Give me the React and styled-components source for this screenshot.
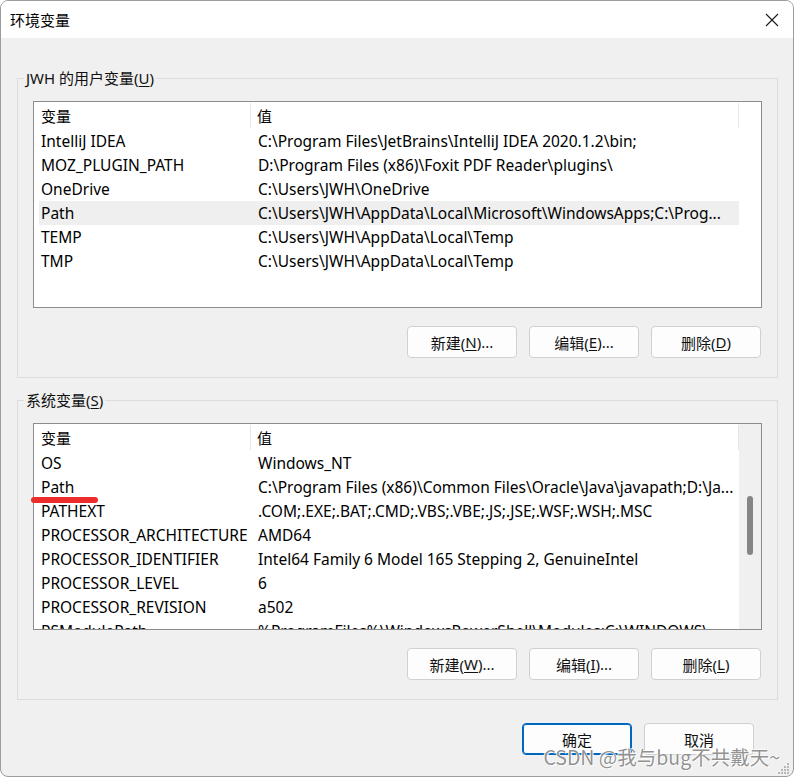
import React from 'react';
import styled, { createGlobalStyle } from 'styled-components';

const Global = createGlobalStyle`
  html, body { margin: 0; padding: 0; background: #ffffff; }
  body { font-family: "Noto Sans", "Noto Sans CJK SC", sans-serif; }
  * { box-sizing: border-box; }
`;

const Window = styled.div`
  position: relative;
  width: 794px;
  height: 777px;
  border: 1px solid #9c9c9c;
  border-radius: 8px;
  overflow: hidden;
  background: #f0f0f0;
  display: flex;
  flex-direction: column;
  font-family: "Noto Sans", "Noto Sans CJK SC", sans-serif;
  font-size: 15px;
  color: #000;
`;

const TitleBar = styled.div`
  height: 37px;
  flex: none;
  background: #ffffff;
  display: flex;
  align-items: center;
  justify-content: space-between;
  padding: 0 14px 0 9px;
  font-size: 15px;
`;

const CloseBtn = styled.div`
  width: 14px;
  height: 14px;
  display: flex;
  align-items: center;
  justify-content: center;
`;

const Body = styled.div`
  flex: 1;
  display: flex;
  flex-direction: column;
  padding: 30px 15px 0 16px;
`;

const Group = styled.fieldset`
  margin: ${p => (p.$first ? '0' : '12px 0 0 0')};
  padding: 13px 15px 19px 15px;
  border: 1px solid #dcdcdc;
  min-width: 0;
`;

const Legend = styled.legend`
  padding: 0 2px;
  margin-left: -9px;
  line-height: 20px;
  font-size: 15px;
  color: #111;
`;

const Key = styled.span`
  text-decoration: underline;
  text-underline-offset: 2px;
  text-decoration-thickness: 1px;
`;

const ListBox = styled.div`
  height: 207px;
  border: 1px solid #8c8c8c;
  background: #ffffff;
  display: flex;
  overflow: hidden;
  font-size: 15.5px;
`;

const Table = styled.div`
  width: 705px;
  flex: none;
  padding-left: 5px;
  display: flex;
  flex-direction: column;
  overflow: hidden;
`;

const Header = styled.div`
  height: 27px;
  flex: none;
  display: flex;
  align-items: stretch;
  font-size: 15px;
`;

const HeadCell = styled.div`
  width: ${p => p.$w}px;
  flex: ${p => (p.$w ? 'none' : '1')};
  padding-left: ${p => p.$pad}px;
  display: flex;
  align-items: center;
  border-right: 1px solid #e6e6e6;
  margin: 1px 0;
`;

const Row = styled.div`
  height: 24px;
  flex: none;
  display: flex;
  align-items: center;
  background: ${p => (p.$sel ? '#efefef' : 'transparent')};
  white-space: nowrap;
`;

const NameCell = styled.div`
  width: 213px;
  flex: none;
  padding-left: 2px;
  overflow: hidden;
`;

const ValueCell = styled.div`
  flex: 1;
  min-width: 0;
  padding-left: 6px;
  overflow: hidden;
`;

const Track = styled.div`
  flex: 1;
  background: ${p => (p.$show ? '#f0f0f0' : '#ffffff')};
  display: flex;
  justify-content: center;
  padding-top: 72px;
`;

const Thumb = styled.div`
  width: 6px;
  height: 59px;
  border-radius: 3px;
  background: #858585;
`;

const ButtonRow = styled.div`
  display: flex;
  justify-content: flex-end;
  gap: 12px;
  margin-top: ${p => p.$mt || 18}px;
  padding-right: ${p => p.$pr || 1}px;
`;

const Button = styled.button`
  width: 110px;
  height: 32px;
  border: 1px solid ${p => (p.$primary ? '#0067c0' : '#d0d0d0')};
  box-shadow: ${p => (p.$primary ? 'inset 0 0 0 1px #0067c0' : 'none')};
  border-radius: 4px;
  background: #fdfdfd;
  font-family: "Noto Sans", "Noto Sans CJK SC", sans-serif;
  font-size: 15px;
  color: #111;
  padding: 0;
  display: flex;
  align-items: center;
  justify-content: center;
`;

const Marker = styled.div`
  position: absolute;
  left: 30px;
  top: 496px;
  width: 67px;
  height: 6px;
  border-radius: 3px;
  background: #ec2b2b;
`;

const Watermark = styled.div`
  position: absolute;
  right: 13px;
  top: 742px;
  font-family: "Noto Sans CJK SC", sans-serif;
  font-size: 19.5px;
  line-height: 28px;
  color: rgba(115, 115, 115, 0.78);
  text-shadow: 0 0 1px #fff, 1px 1px 0 rgba(255,255,255,0.8), -1px -1px 0 rgba(255,255,255,0.8);
  white-space: nowrap;
  pointer-events: none;
`;

const Grip = styled.svg`
  position: absolute;
  right: 3px;
  bottom: 2px;
`;

const userVars = [
  ['IntelliJ IDEA', 'C:\\Program Files\\JetBrains\\IntelliJ IDEA 2020.1.2\\bin;'],
  ['MOZ_PLUGIN_PATH', 'D:\\Program Files (x86)\\Foxit PDF Reader\\plugins\\'],
  ['OneDrive', 'C:\\Users\\JWH\\OneDrive'],
  ['Path', 'C:\\Users\\JWH\\AppData\\Local\\Microsoft\\WindowsApps;C:\\Prog...', true],
  ['TEMP', 'C:\\Users\\JWH\\AppData\\Local\\Temp'],
  ['TMP', 'C:\\Users\\JWH\\AppData\\Local\\Temp'],
];

const sysVars = [
  ['OS', 'Windows_NT'],
  ['Path', 'C:\\Program Files (x86)\\Common Files\\Oracle\\Java\\javapath;D:\\Ja...'],
  ['PATHEXT', '.COM;.EXE;.BAT;.CMD;.VBS;.VBE;.JS;.JSE;.WSF;.WSH;.MSC'],
  ['PROCESSOR_ARCHITECTURE', 'AMD64'],
  ['PROCESSOR_IDENTIFIER', 'Intel64 Family 6 Model 165 Stepping 2, GenuineIntel'],
  ['PROCESSOR_LEVEL', '6'],
  ['PROCESSOR_REVISION', 'a502'],
  ['PSModulePath', '%ProgramFiles%\\WindowsPowerShell\\Modules;C:\\WINDOWS\\...'],
];

function VarList({ rows, scroll }) {
  return (
    <ListBox>
      <Table>
        <Header>
          <HeadCell $w={212} $pad={2}>变量</HeadCell>
          <HeadCell $pad={6}>值</HeadCell>
        </Header>
        {rows.map(([k, v, sel]) => (
          <Row key={k} $sel={sel}>
            <NameCell>{k}</NameCell>
            <ValueCell>{v}</ValueCell>
          </Row>
        ))}
      </Table>
      <Track $show={scroll}>{scroll && <Thumb />}</Track>
    </ListBox>
  );
}

function Actions({ keys }) {
  return (
    <ButtonRow>
      <Button>新建(<Key>{keys[0]}</Key>)...</Button>
      <Button>编辑(<Key>{keys[1]}</Key>)...</Button>
      <Button>删除(<Key>{keys[2]}</Key>)</Button>
    </ButtonRow>
  );
}

export default function App() {
  return (
    <>
      <Global />
      <Window>
        <TitleBar>
          <span>环境变量</span>
          <CloseBtn>
            <svg width="14" height="14" viewBox="0 0 14 14">
              <path d="M1 1 L13 13 M13 1 L1 13" stroke="#1a1a1a" strokeWidth="1.1" fill="none" />
            </svg>
          </CloseBtn>
        </TitleBar>
        <Body>
          <Group $first>
            <Legend>JWH 的用户变量(<Key>U</Key>)</Legend>
            <VarList rows={userVars} />
            <Actions keys={['N', 'E', 'D']} />
          </Group>
          <Group>
            <Legend>系统变量(<Key>S</Key>)</Legend>
            <VarList rows={sysVars} scroll />
            <Actions keys={['W', 'I', 'L']} />
          </Group>
          <ButtonRow $mt={23} $pr={24}>
            <Button $primary>确定</Button>
            <Button>取消</Button>
          </ButtonRow>
        </Body>
        <Marker />
        <Watermark>CSDN @我与bug不共戴天~</Watermark>
        <Grip width="12" height="12" viewBox="0 0 12 12">
          {[[9, 1], [6, 4], [9, 4], [3, 7], [6, 7], [9, 7], [0, 10], [3, 10], [6, 10], [9, 10]].map(([x, y]) => (
            <rect key={`${x}-${y}`} x={x} y={y} width="2" height="2" fill="#b8b8b8" />
          ))}
        </Grip>
      </Window>
    </>
  );
}
